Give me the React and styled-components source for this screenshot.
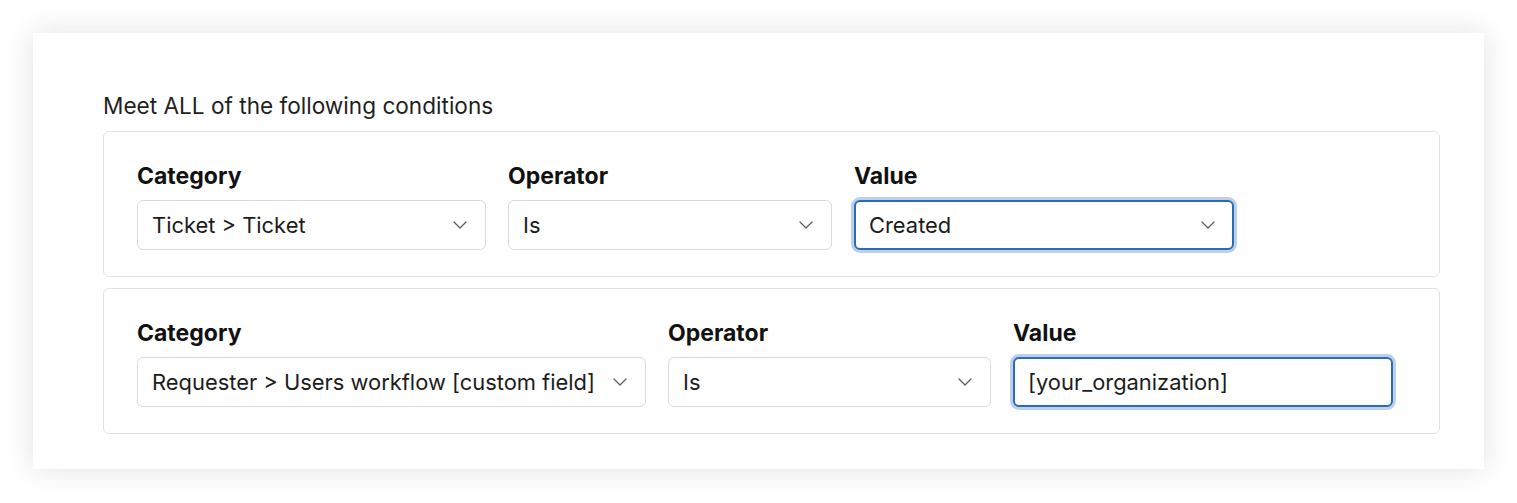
import React from 'react';
import styled, { createGlobalStyle } from 'styled-components';

const GlobalStyle = createGlobalStyle`
	html, body {
		margin: 0;
		padding: 0;
		background: #ffffff;
	}
	body {
		font-family: Inter, 'Noto Sans', sans-serif;
		color: #1a1a1a;
	}
`;

const Page = styled.div`
	padding: 33px 33px 34px;
	box-sizing: border-box;
	height: 503px;
`;

const Card = styled.div`
	background: #fff;
	height: 436px;
	box-sizing: border-box;
	padding: 59px 44px 35px 70px;
	box-shadow: 0 0 28px rgba(0, 0, 0, 0.12);
`;

const Heading = styled.h2`
	margin: 0 0 12px;
	font-size: 22.6px;
	font-weight: 400;
	line-height: 27px;
	color: #1f1f1f;
`;

const Conditions = styled.div`
	display: flex;
	flex-direction: column;
	gap: 11px;
`;

const Panel = styled.div`
	border: 1px solid #e2e2e2;
	border-radius: 6px;
	padding: 31px 33px 26px;
	display: flex;
	gap: 22px;
`;

const Field = styled.div`
	display: flex;
	flex-direction: column;
	gap: 11px;
	width: ${p => p.$width}px;
`;

const Label = styled.label`
	font-size: 23px;
	font-weight: 700;
	line-height: 26px;
	color: #111;
`;

const Box = styled.div`
	height: 50px;
	box-sizing: border-box;
	border: ${p => (p.$focused ? '2px solid #2b6cb8' : '1px solid #d8dadd')};
	box-shadow: ${p => (p.$focused ? '0 0 0 3px #bcd0ea' : 'none')};
	border-radius: 6px;
	display: flex;
	align-items: center;
	justify-content: space-between;
	padding: 0 ${p => (p.$focused ? 17 : 18)}px 0 ${p => (p.$focused ? 13 : 14)}px;
	font-size: 21.9px;
	color: #1c1c1c;
	background: #fff;
	white-space: nowrap;
`;

const Chevron = () => (
	<svg width="14" height="8" viewBox="0 0 14 8" fill="none">
		<path d="M1 1l6 6 6-6" stroke="#5a5f66" strokeWidth="1.3" strokeLinecap="round" strokeLinejoin="round" />
	</svg>
);

const Select = ({ value, focused }) => (
	<Box $focused={focused}>
		<span>{value}</span>
		<Chevron />
	</Box>
);

const rows = [
	[
		{ label: 'Category', value: 'Ticket > Ticket', width: 349 },
		{ label: 'Operator', value: 'Is', width: 324 },
		{ label: 'Value', value: 'Created', width: 380, focused: true },
	],
	[
		{ label: 'Category', value: 'Requester > Users workflow [custom field]', width: 509 },
		{ label: 'Operator', value: 'Is', width: 323 },
		{ label: 'Value', value: '[your_organization]', width: 380, focused: true, input: true },
	],
];

const App = () => (
	<>
		<GlobalStyle />
		<Page>
			<Card>
				<Heading>Meet ALL of the following conditions</Heading>
				<Conditions>
					{rows.map((row, i) => (
						<Panel key={i}>
							{row.map(f => (
								<Field key={f.label} $width={f.width}>
									<Label>{f.label}</Label>
									{f.input ? (
										<Box $focused>
											<span>{f.value}</span>
										</Box>
									) : (
										<Select value={f.value} focused={f.focused} />
									)}
								</Field>
							))}
						</Panel>
					))}
				</Conditions>
			</Card>
		</Page>
	</>
);

export default App;
